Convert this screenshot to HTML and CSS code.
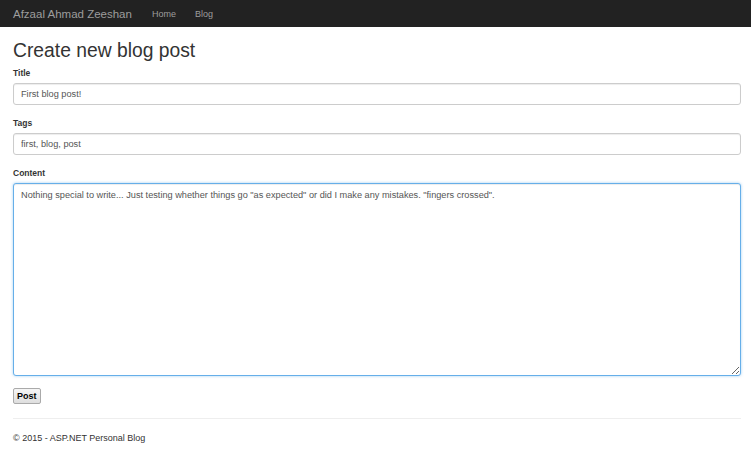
FILE: index.html
```html
<!DOCTYPE html>
<html>
<head>
<meta charset="utf-8">
<title>Create new blog post</title>
<link rel="stylesheet" href="styles.css">
</head>
<body>
<nav class="navbar">
  <a class="brand" href="#">Afzaal Ahmad Zeeshan</a>
  <a class="nav-link" href="#">Home</a>
  <a class="nav-link" href="#">Blog</a>
</nav>
<main class="container">
  <h1 class="title">Create new blog post</h1>
  <form class="form">
    <div class="group">
      <label class="label">Title</label>
      <input class="control" type="text" value="First blog post!">
    </div>
    <div class="group">
      <label class="label">Tags</label>
      <input class="control" type="text" value="first, blog, post">
    </div>
    <div class="group last">
      <label class="label">Content</label>
      <textarea class="control area">Nothing special to write... Just testing whether things go "as expected" or did I make any mistakes. "fingers crossed".</textarea>
    </div>
    <button class="btn" type="button">Post</button>
  </form>
  <hr class="rule">
  <footer class="footer">© 2015 - ASP.NET Personal Blog</footer>
</main>
</body>
</html>
```
FILE: styles.css
```css
html, body {
  margin: 0;
  padding: 0;
  background: #fff;
  font-family: "Liberation Sans", Arial, sans-serif;
  color: #333;
}
.navbar {
  height: 27px;
  background: #222;
  display: flex;
  align-items: center;
  padding-left: 13px;
  box-sizing: border-box;
}
.brand {
  color: #9d9d9d;
  text-decoration: none;
  font-size: 11.5px;
  margin-right: 20px;
}
.nav-link {
  color: #9d9d9d;
  text-decoration: none;
  font-size: 9px;
  margin-right: 19px;
}
.container {
  padding: 0 10px 0 13px;
}
.title {
  font-weight: normal;
  font-size: 19.3px;
  margin: 12px 0 5px;
  line-height: 24px;
}
.form {
  display: flex;
  flex-direction: column;
}
.group {
  display: flex;
  flex-direction: column;
  margin-bottom: 13px;
}
.label {
  font-size: 8.5px;
  font-weight: bold;
  margin-bottom: 4px;
  line-height: 11px;
}
.control {
  font-family: "Liberation Sans", Arial, sans-serif;
  font-size: 9.2px;
  color: #555;
  height: 22px;
  box-sizing: border-box;
  border: 1px solid #ccc;
  border-radius: 3px;
  padding: 3px 7px;
  box-shadow: inset 0 1px 1px rgba(0,0,0,0.075);
  width: 728px;
  margin: 0;
}
.area {
  height: 193px;
  border-color: #66afe9;
  box-shadow: inset 0 1px 1px rgba(0,0,0,0.075), 0 0 3px rgba(102,175,233,0.6);
  resize: vertical;
  padding: 6px 7px;
  outline: none;
}
.group.last {
  margin-bottom: 12px;
}
.btn {
  align-self: flex-start;
  font-family: "Liberation Sans", Arial, sans-serif;
  font-size: 9px;
  font-weight: bold;
  color: #000;
  background: linear-gradient(#f6f6f6, #dedede);
  border: 1px solid #aaa;
  border-radius: 2px;
  padding: 2px 3px;
  height: 16px;
  line-height: 10px;
}
.rule {
  border: 0;
  border-top: 1px solid #eee;
  margin: 14px 0 14px;
}
.footer {
  font-size: 9px;
  color: #333;
}
```
